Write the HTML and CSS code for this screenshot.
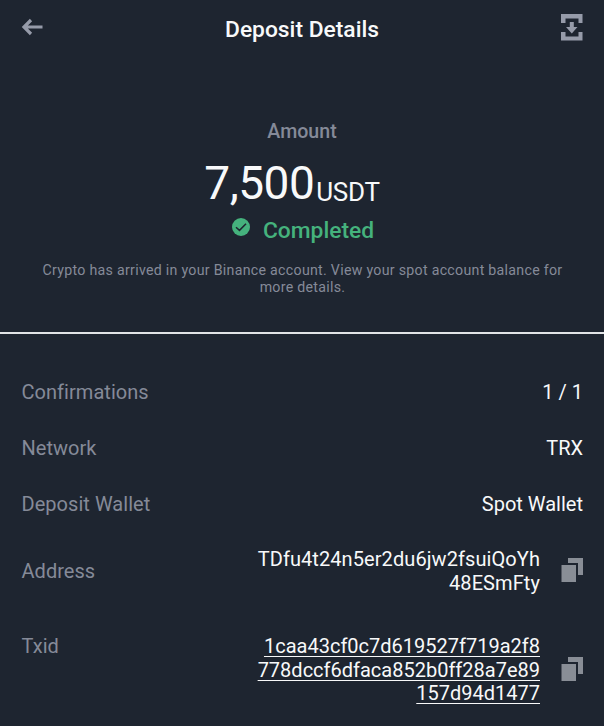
FILE: index.html
```html
<!DOCTYPE html>
<html lang="en">
<head>
  <meta charset="UTF-8" />
  <meta name="viewport" content="width=device-width, initial-scale=1.0"/>
  <title>Deposit Details</title>
  <link rel="stylesheet" href="styles.css">
</head>
<body>
  <header class="topbar">
    <a href="#" class="back" aria-label="Back">
      <svg width="22" height="18" viewBox="0 0 22 18">
        <path d="M21.500 9H3M10 2L3 9L10 16" fill="none" stroke="currentColor" stroke-width="3.200"/>
      </svg>
    </a>
    <h1>Deposit Details</h1>
    <a href="#" class="save" aria-label="Save">
      <svg width="22" height="27" viewBox="0 0 22 27" fill="currentColor">
        <path d="M0 0H21.500V9H17.500V4.500H4.500V9H0ZM0 18H4.500V22.500H17.500V18H21.500V26.500H0ZM8.800 8H12.800V13H16.500L10.800 19.500L5 13H8.800Z"/>
      </svg>
    </a>
  </header>

  <section class="summary">
    <p class="label">Amount</p>
    <p class="amount">7,500<span class="coin">USDT</span></p>
    <p class="status">
      <svg width="18" height="18" viewBox="0 0 18 18">
        <circle cx="9" cy="9" r="9" fill="#45b27d"/>
        <path d="M4 9.200L7.500 12.400L14 5.800" fill="none" stroke="#1e2530" stroke-width="1.500"/>
      </svg>
      <span>Completed</span>
    </p>
    <p class="note">Crypto has arrived in your Binance account. View your spot account balance for more details.</p>
  </section>

  <main class="details">
    <div class="row">
      <span class="name">Confirmations</span>
      <span class="value">1 / 1</span>
    </div>
    <div class="row">
      <span class="name">Network</span>
      <span class="value">TRX</span>
    </div>
    <div class="row">
      <span class="name">Deposit Wallet</span>
      <span class="value">Spot Wallet</span>
    </div>
    <div class="row address">
      <span class="name">Address</span>
      <span class="value">TDfu4t24n5er2du6jw2fsuiQoYh<br>48ESmFty</span>
      <button class="copy" aria-label="Copy address">
        <svg width="22" height="24" viewBox="0 0 22 24" fill="currentColor">
          <path d="M0.500 7H15V24H0.500ZM7 0H22V17H17V5H7Z"/>
        </svg>
      </button>
    </div>
    <div class="row txid">
      <span class="name">Txid</span>
      <a href="#" class="value">1caa43cf0c7d619527f719a2f8<br>778dccf6dfaca852b0ff28a7e89<br>157d94d1477</a>
      <button class="copy" aria-label="Copy txid">
        <svg width="22" height="24" viewBox="0 0 22 24" fill="currentColor">
          <path d="M0.500 7H15V24H0.500ZM7 0H22V17H17V5H7Z"/>
        </svg>
      </button>
    </div>
  </main>
</body>
</html>
```
FILE: styles.css
```css
:root {
  --bg: #1e2530;
  --grey: #858a98;
  --white: #f8f9fa;
  --green: #45b27d;
}

* {
  box-sizing: border-box;
}

body {
  font-family: Roboto, sans-serif;
  background-color: var(--bg);
  color: var(--white);
  margin: 0;
  min-height: 100vh;
}

p,
h1 {
  margin: 0;
}

.topbar {
  display: grid;
  grid-template-columns: 40px 1fr 40px;
  height: 60px;
  padding: 14px 21px 0;
}

.topbar a {
  color: #969ba9;
}

.topbar svg {
  display: block;
}

.back {
  padding-top: 4px;
}

.save {
  justify-self: end;
}

.topbar h1 {
  padding-top: 1px;
  font-size: 22.8px;
  font-weight: 500;
  line-height: 30px;
  text-align: center;
}

.summary {
  height: 274px;
  padding: 60px 36px 0;
  border-bottom: 2px solid #e2e4e6;
  text-align: center;
}

.label {
  color: var(--grey);
  font-size: 19.6px;
  font-weight: 500;
  line-height: 24px;
}

.amount {
  display: flex;
  justify-content: center;
  align-items: flex-end;
  margin: 11px 20px 0 0;
  font-size: 46px;
  letter-spacing: -0.5px;
  line-height: 56px;
}

.coin {
  margin: 0 0 4px 2px;
  font-size: 26px;
  letter-spacing: -0.3px;
  line-height: 30px;
}

.status {
  display: flex;
  justify-content: center;
  gap: 13px;
  margin-top: 7px;
  padding-left: 2px;
  color: var(--green);
  font-size: 22.8px;
  font-weight: 500;
  line-height: 26px;
}

.note {
  margin-top: 18px;
  padding-left: 1px;
  color: var(--grey);
  font-size: 14.2px;
  letter-spacing: 0.28px;
  line-height: 17px;
}

.details {
  padding: 47px 21px 0;
  font-size: 20px;
  line-height: 23.5px;
}

.row {
  display: flex;
  align-items: center;
  height: 24px;
  margin-bottom: 32px;
}

.name {
  padding-left: 0.5px;
  color: var(--grey);
  letter-spacing: 0.04px;
}

.value {
  margin-left: auto;
  color: var(--white);
  text-align: right;
}

.copy {
  width: 22px;
  height: 24px;
  margin-left: 21px;
  padding: 0;
  border: none;
  background: none;
  color: #898e96;
  cursor: pointer;
}

.copy svg {
  display: block;
}

.address {
  height: 47px;
  margin-top: -1px;
  margin-bottom: 40px;
}

.address .value {
  letter-spacing: 0.08px;
}

.address .copy {
  margin-bottom: 4px;
}

.txid {
  height: 71px;
}

.txid .name {
  align-self: flex-start;
}

.txid .value {
  text-decoration-thickness: 1px;
  text-decoration-skip-ink: none;
  text-underline-offset: 3px;
}

.txid .copy {
  margin-bottom: 4px;
}
```
